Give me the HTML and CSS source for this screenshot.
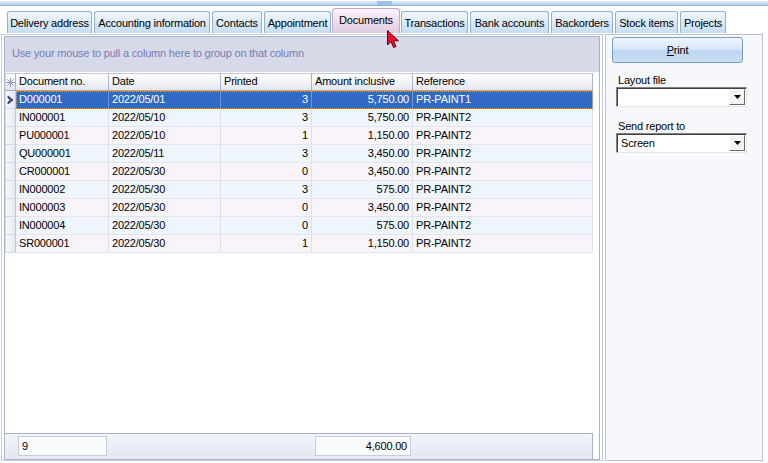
FILE: index.html
```html
<!DOCTYPE html>
<html>
<head>
<meta charset="utf-8">
<link rel="stylesheet" href="styles.css">
</head>
<body>
<div class="topbar"><div class="notch"></div></div>
<div class="tabs">
  <div class="tab">Delivery address</div>
  <div class="tab">Accounting information</div>
  <div class="tab">Contacts</div>
  <div class="tab">Appointment</div>
  <div class="tab active">Documents</div>
  <div class="tab">Transactions</div>
  <div class="tab">Bank accounts</div>
  <div class="tab">Backorders</div>
  <div class="tab">Stock items</div>
  <div class="tab">Projects</div>
</div>
<div class="main">
  <div class="left">
    <div class="leftin">
      <div class="group">Use your mouse to pull a column here to group on that column</div>
      <div class="grid">
        <div class="row head">
          <div class="ind"><svg width="9" height="9" viewBox="0 0 9 9"><g stroke="#8f9cc4" stroke-width="1"><line x1="4.5" y1="0" x2="4.5" y2="9"/><line x1="0" y1="4.5" x2="9" y2="4.5"/><line x1="1.3" y1="1.3" x2="7.7" y2="7.7"/><line x1="7.7" y1="1.3" x2="1.3" y2="7.7"/></g></svg></div>
          <div class="c">Document no.</div>
          <div class="c">Date</div>
          <div class="c">Printed</div>
          <div class="c">Amount inclusive</div>
          <div class="c">Reference</div>
        </div>
        <div class="row sel">
          <div class="ind"><svg width="7" height="10" viewBox="0 0 7 10"><path d="M1 1 L6 5 L1 9 L1 7 L3.5 5 L1 3 Z" fill="#3d4a86" stroke="#3d4a86" stroke-width="1" stroke-linejoin="round"/></svg></div>
          <div class="cells">
            <div class="c">D000001</div><div class="c">2022/05/01</div><div class="c r">3</div><div class="c r">5,750.00</div><div class="c">PR-PAINT1</div>
          </div>
        </div>
        <div class="row b">
          <div class="ind"></div>
          <div class="cells"><div class="c">IN000001</div><div class="c">2022/05/10</div><div class="c r">3</div><div class="c r">5,750.00</div><div class="c">PR-PAINT2</div></div>
        </div>
        <div class="row p">
          <div class="ind"></div>
          <div class="cells"><div class="c">PU000001</div><div class="c">2022/05/10</div><div class="c r">1</div><div class="c r">1,150.00</div><div class="c">PR-PAINT2</div></div>
        </div>
        <div class="row b">
          <div class="ind"></div>
          <div class="cells"><div class="c">QU000001</div><div class="c">2022/05/11</div><div class="c r">3</div><div class="c r">3,450.00</div><div class="c">PR-PAINT2</div></div>
        </div>
        <div class="row p">
          <div class="ind"></div>
          <div class="cells"><div class="c">CR000001</div><div class="c">2022/05/30</div><div class="c r">0</div><div class="c r">3,450.00</div><div class="c">PR-PAINT2</div></div>
        </div>
        <div class="row b">
          <div class="ind"></div>
          <div class="cells"><div class="c">IN000002</div><div class="c">2022/05/30</div><div class="c r">3</div><div class="c r">575.00</div><div class="c">PR-PAINT2</div></div>
        </div>
        <div class="row p">
          <div class="ind"></div>
          <div class="cells"><div class="c">IN000003</div><div class="c">2022/05/30</div><div class="c r">0</div><div class="c r">3,450.00</div><div class="c">PR-PAINT2</div></div>
        </div>
        <div class="row b">
          <div class="ind"></div>
          <div class="cells"><div class="c">IN000004</div><div class="c">2022/05/30</div><div class="c r">0</div><div class="c r">575.00</div><div class="c">PR-PAINT2</div></div>
        </div>
        <div class="row p">
          <div class="ind"></div>
          <div class="cells"><div class="c">SR000001</div><div class="c">2022/05/30</div><div class="c r">1</div><div class="c r">1,150.00</div><div class="c">PR-PAINT2</div></div>
        </div>
      </div>
      <div class="footer">
        <div class="fcell f1">9</div>
        <div class="fcell f2">4,600.00</div>
      </div>
    </div>
  </div>
  <div class="right">
    <div class="btn"><span class="u">P</span>rint</div>
    <div class="lbl first">Layout file</div>
    <div class="combo"><div class="val"></div><div class="drop"><svg width="7" height="4" viewBox="0 0 7 4"><path d="M0 0 H7 L3.5 4 Z" fill="#000"/></svg></div></div>
    <div class="lbl">Send report to</div>
    <div class="combo"><div class="val">Screen</div><div class="drop"><svg width="7" height="4" viewBox="0 0 7 4"><path d="M0 0 H7 L3.5 4 Z" fill="#000"/></svg></div></div>
  </div>
</div>
<svg class="cursor" width="14" height="20" viewBox="0 0 14 20"><path d="M0.5 0.5 L0.5 15 L4 11.5 L6.5 17.5 L9 16.5 L6.5 10.8 L11.5 10.8 Z" fill="#e8102c" stroke="#6a0010" stroke-width="1" stroke-linejoin="round"/></svg>
</body>
</html>
```
FILE: styles.css
```css
* { box-sizing: border-box; }
html, body { margin: 0; padding: 0; }
body {
  width: 768px;
  height: 463px;
  overflow: hidden;
  background: #ffffff;
  font-family: "Liberation Sans", Arial, sans-serif;
  font-size: 11px;
  letter-spacing: -0.2px;
  color: #000;
  position: relative;
}
.topbar {
  margin-top: 1px;
  height: 5px;
  background: linear-gradient(#e4eefa, #b4cfee);
  border-bottom: 1px solid #8fb0d8;
  display: flex;
}
.notch {
  margin-left: 377px;
  width: 15px;
  height: 4px;
  background: #9fc2ec;
}
.tabs {
  height: 27px;
  display: grid;
  grid-template-columns: 85px 116px 50px 67px 66px 67px 79px 62px 63px 46px;
  column-gap: 2px;
  align-items: end;
  padding-left: 7px;
}
.tab {
  height: 22px;
  border: 1px solid #8eb0da;
  border-bottom: none;
  border-radius: 3px 3px 0 0;
  background: linear-gradient(#f3f8fe 0%, #dcebfa 45%, #c6ddf5 100%);
  display: flex;
  align-items: center;
  justify-content: center;
  white-space: nowrap;
  padding-top: 1px;
}
.tab.active {
  height: 25px;
  margin-left: -1px;
  margin-right: -1px;
  border-color: #c3a9c6;
  background: linear-gradient(#faf4fa 0%, #eedfed 50%, #e0c9df 100%);
  padding-bottom: 3px;
}
.main {
  height: 430px;
  display: flex;
  column-gap: 2px;
  padding: 1px 5px 2px 1px;
}
.left {
  flex: 1;
  border: 1px solid #c6cce0;
  padding: 1px 2px 0 2px;
  display: flex;
}
.leftin {
  flex: 1;
  border: 1px solid #a9b2cf;
  display: flex;
  flex-direction: column;
}
.group {
  height: 35px;
  background: #d6d9e7;
  color: #7480b5;
  padding: 10px 0 0 7px;
  white-space: nowrap;
}
.grid {
  flex: 1;
  background: #ffffff;
  padding-top: 1px;
}
.row {
  width: 588px;
  height: 18px;
  display: grid;
  grid-template-columns: 11px 577px;
}
.row.head {
  grid-template-columns: 11px 93px 112px 91px 101px 180px;
}
.cells {
  display: grid;
  grid-template-columns: 93px 112px 91px 101px 180px;
}
.c {
  padding: 0 3px;
  line-height: 17px;
  white-space: nowrap;
  overflow: hidden;
  border-right: 1px solid #dde0ec;
  border-bottom: 1px solid #e2e4ee;
}
.c.r { text-align: right; }
.ind {
  background: linear-gradient(90deg, #f7f8fb, #e6e8f0);
  border-right: 1px solid #bfc5d8;
  border-bottom: 1px solid #d2d6e4;
  border-left: 1px solid #d8dce8;
  display: flex;
  align-items: center;
  justify-content: center;
}
.head .c, .head .ind {
  background: linear-gradient(#ffffff 0%, #f3f4f8 50%, #e3e6ef 100%);
  border-top: 1px solid #c3c8dc;
  border-right: 1px solid #aab1ca;
  border-bottom: 1px solid #9fa7c4;
  line-height: 15px;
}
.row.b .cells { background: #eef5fd; }
.row.p .cells { background: #f9f4f9; }
.row.sel .cells {
  background: #316ac5;
  color: #ffffff;
  outline: 1px dotted #e2a241;
  outline-offset: -1px;
}
.row.sel .c {
  border-right-color: #6f96d6;
  border-bottom-color: #316ac5;
}
.footer {
  width: 588px;
  height: 26px;
  border-top: 1px solid #a9b1cc;
  border-right: 1px solid #a9b1cc;
  background: linear-gradient(#f3f4f9, #e4e7f1);
  display: grid;
  grid-template-columns: 13px 89px 208px 96px;
  padding-top: 2px;
}
.fcell {
  height: 20px;
  background: #f9fafc;
  border: 1px solid #c6cbde;
  line-height: 18px;
  padding: 0 3px;
}
.f1 { grid-column: 2; }
.f2 { grid-column: 4; text-align: right; }
.right {
  width: 158px;
  border: 1px solid #b9c0d8;
  background: #f7f8fc;
  padding: 2px 0 0 6px;
  display: flex;
  flex-direction: column;
}
.btn {
  width: 131px;
  height: 26px;
  flex: none;
  border: 1px solid #7b9cc6;
  border-radius: 3px;
  background: linear-gradient(#eef5fd 0%, #d8e8f8 45%, #bcd6f1 55%, #c9def4 100%);
  display: flex;
  align-items: center;
  justify-content: center;
}
.u { text-decoration: underline; }
.lbl {
  margin: 12px 0 0 6px;
  height: 14px;
  line-height: 14px;
  flex: none;
}
.lbl.first { margin-top: 10px; }
.combo {
  margin-left: 4px;
  width: 131px;
  height: 20px;
  flex: none;
  background: #ffffff;
  border-top: 1px solid #808080;
  border-left: 1px solid #808080;
  border-right: 1px solid #e6e6e6;
  border-bottom: 1px solid #e6e6e6;
  box-shadow: inset 1px 1px 0 #404040;
  display: flex;
  padding: 1px 1px 1px 1px;
}
.combo .val {
  flex: 1;
  padding-left: 3px;
  line-height: 16px;
}
.drop {
  width: 16px;
  height: 16px;
  background: #f4f4f4;
  border-top: 1px solid #ffffff;
  border-left: 1px solid #ffffff;
  border-right: 1px solid #6a6a6a;
  border-bottom: 1px solid #6a6a6a;
  display: flex;
  align-items: center;
  justify-content: center;
}
.cursor {
  position: absolute;
  left: 387px;
  top: 30px;
}
```
